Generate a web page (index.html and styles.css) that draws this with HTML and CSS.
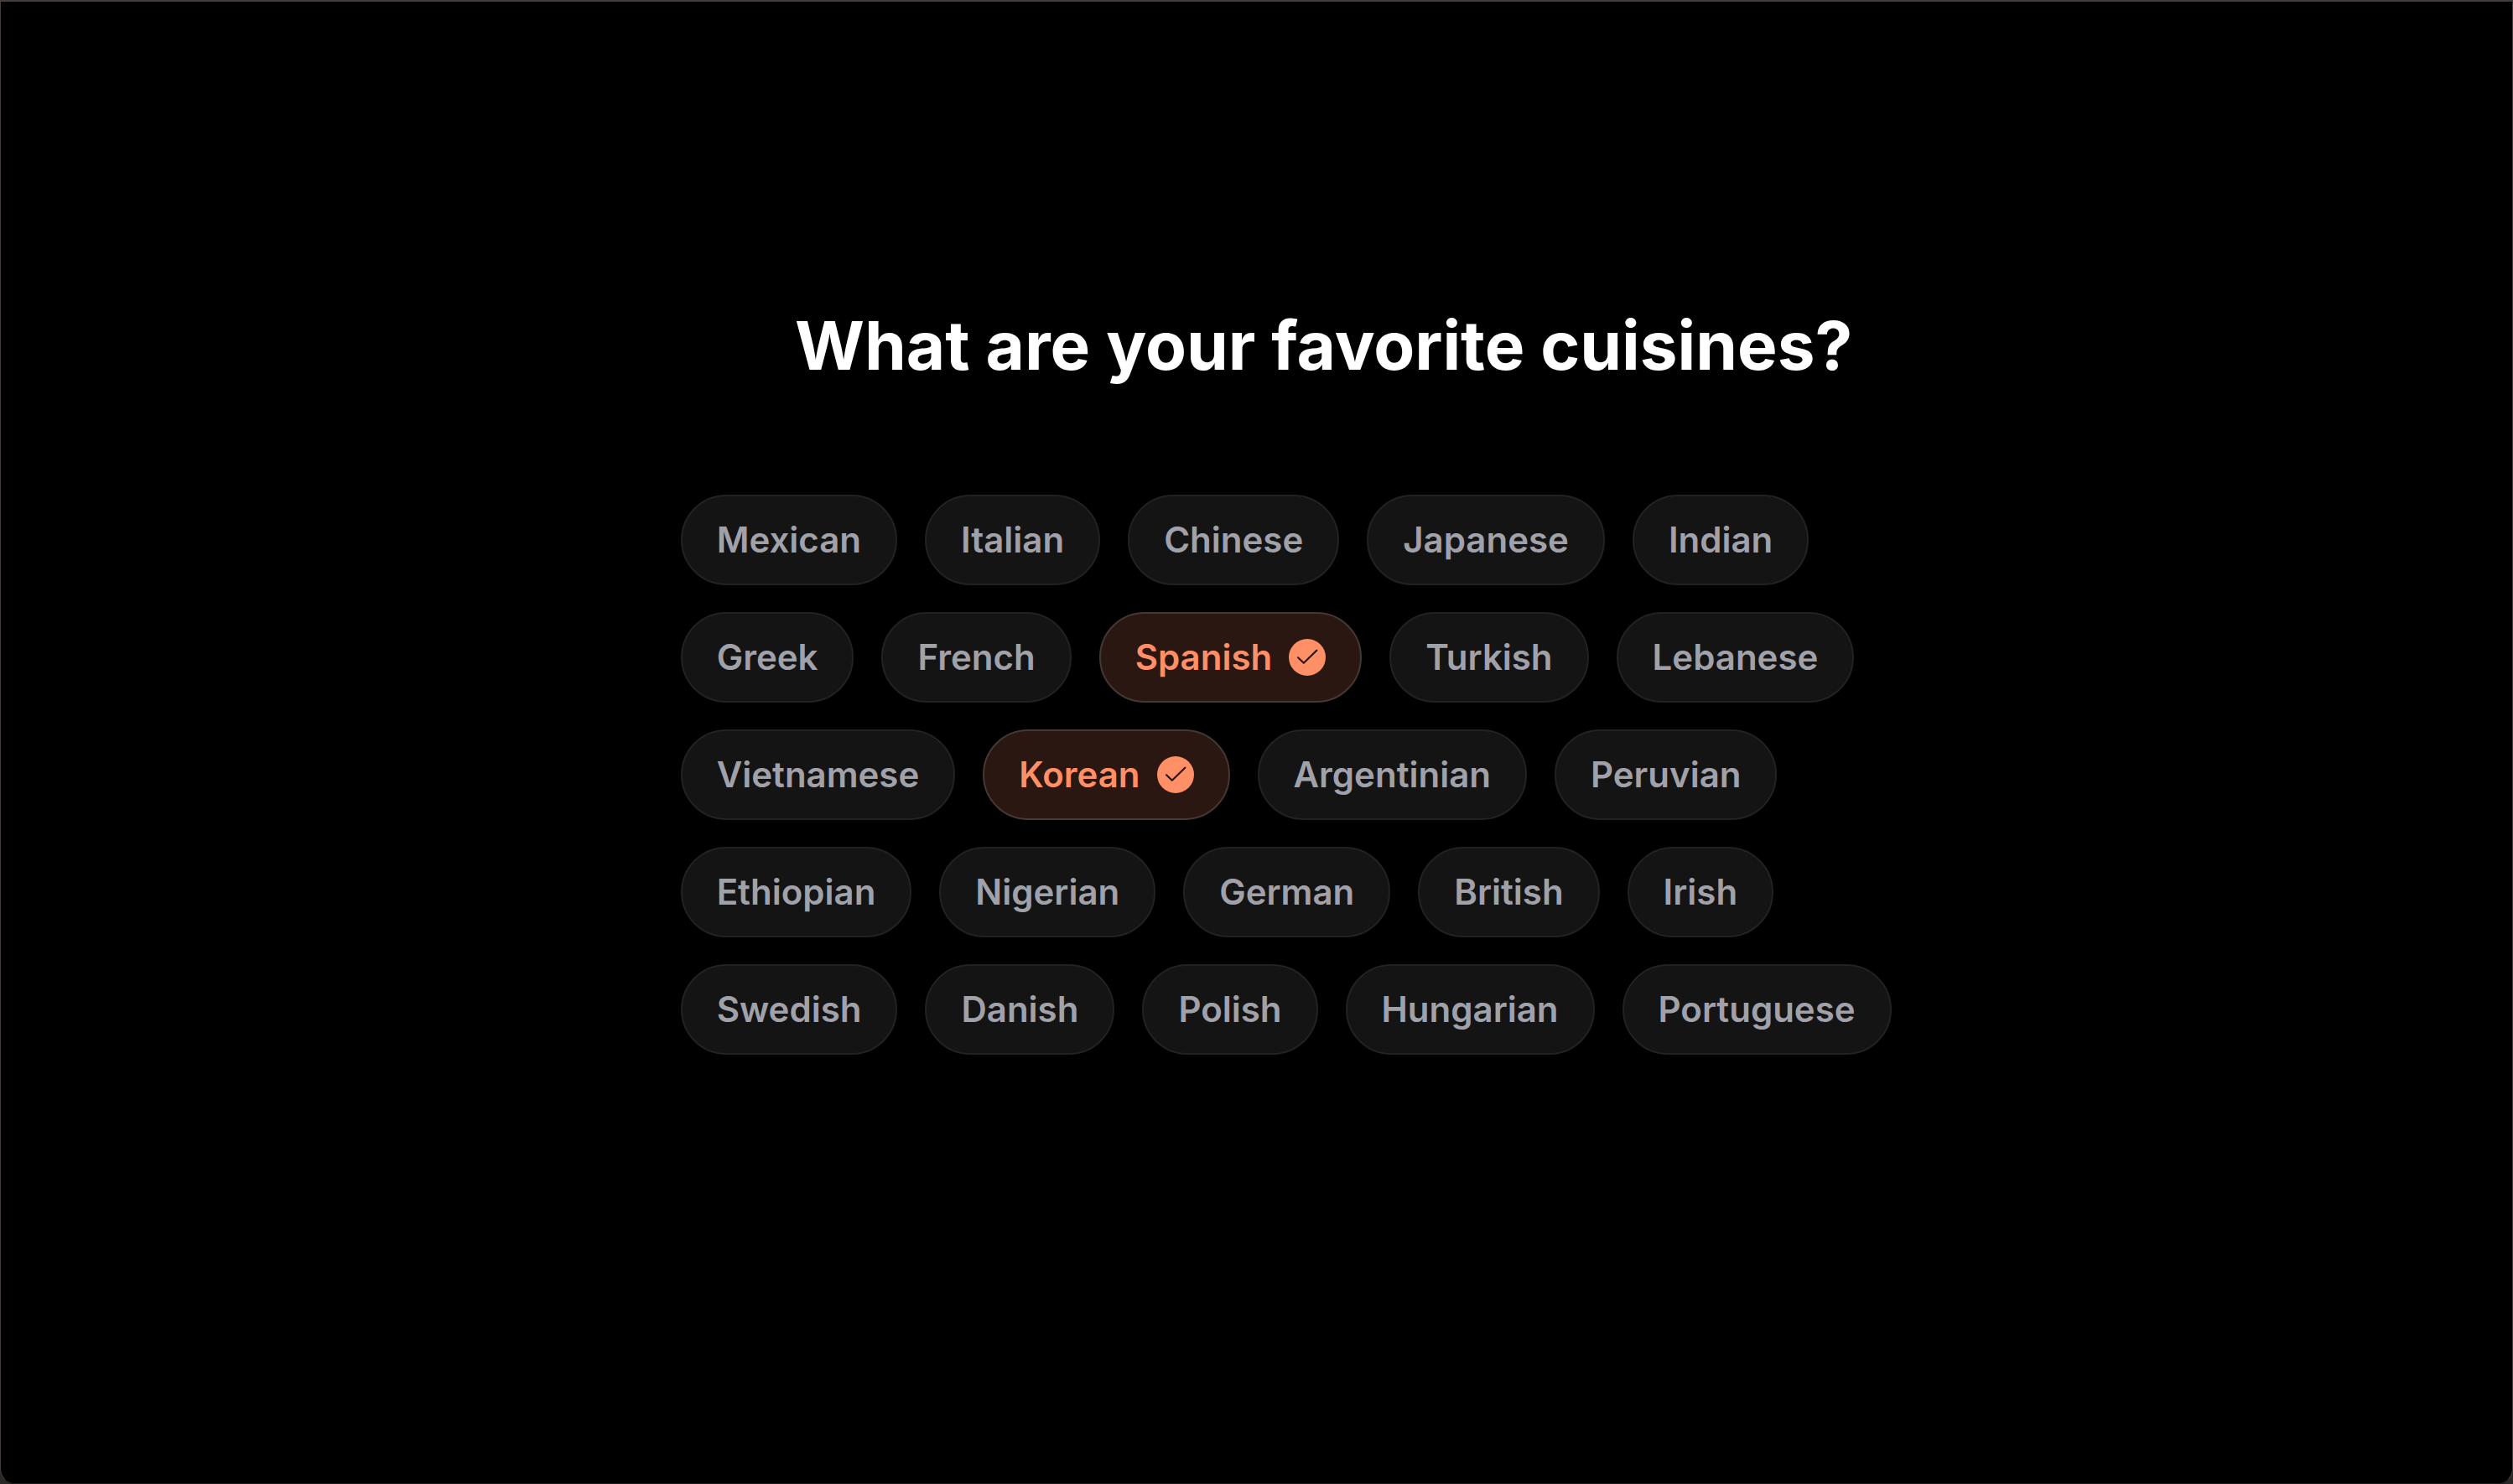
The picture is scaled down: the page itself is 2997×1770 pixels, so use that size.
FILE: index.html
```html
<!DOCTYPE html>
<html lang="en">
<head>
<meta charset="utf-8">
<meta name="viewport" content="width=device-width, initial-scale=1">
<title>What are your favorite cuisines?</title>
<link rel="stylesheet" href="styles.css">
</head>
<body>
<main class="window">
  <h1 class="title">What are your favorite cuisines?</h1>
  <div class="chips">
    <button type="button" class="chip" aria-pressed="false">Mexican</button>
    <button type="button" class="chip" aria-pressed="false">Italian</button>
    <button type="button" class="chip" aria-pressed="false">Chinese</button>
    <button type="button" class="chip" aria-pressed="false">Japanese</button>
    <button type="button" class="chip" aria-pressed="false">Indian</button>
    <button type="button" class="chip" aria-pressed="false">Greek</button>
    <button type="button" class="chip" aria-pressed="false">French</button>
    <button type="button" class="chip chip-selected" aria-pressed="true">Spanish
      <svg class="check" viewBox="0 0 44 44" aria-hidden="true"><circle cx="22" cy="22" r="22" fill="#ff8f66"/><path d="M11 22.3 17.8 28.8 33.3 13.7" fill="none" stroke="#2a1711" stroke-width="2.2" stroke-linecap="round" stroke-linejoin="round"/></svg>
    </button>
    <button type="button" class="chip" aria-pressed="false">Turkish</button>
    <button type="button" class="chip" aria-pressed="false">Lebanese</button>
    <button type="button" class="chip" aria-pressed="false">Vietnamese</button>
    <button type="button" class="chip chip-selected" aria-pressed="true">Korean
      <svg class="check" viewBox="0 0 44 44" aria-hidden="true"><circle cx="22" cy="22" r="22" fill="#ff8f66"/><path d="M11 22.3 17.8 28.8 33.3 13.7" fill="none" stroke="#2a1711" stroke-width="2.2" stroke-linecap="round" stroke-linejoin="round"/></svg>
    </button>
    <button type="button" class="chip" aria-pressed="false">Argentinian</button>
    <button type="button" class="chip" aria-pressed="false">Peruvian</button>
    <button type="button" class="chip" aria-pressed="false">Ethiopian</button>
    <button type="button" class="chip" aria-pressed="false">Nigerian</button>
    <button type="button" class="chip" aria-pressed="false">German</button>
    <button type="button" class="chip" aria-pressed="false">British</button>
    <button type="button" class="chip" aria-pressed="false">Irish</button>
    <button type="button" class="chip" aria-pressed="false">Swedish</button>
    <button type="button" class="chip" aria-pressed="false">Danish</button>
    <button type="button" class="chip" aria-pressed="false">Polish</button>
    <button type="button" class="chip" aria-pressed="false">Hungarian</button>
    <button type="button" class="chip" aria-pressed="false">Portuguese</button>
  </div>
</main>
</body>
</html>
```
FILE: styles.css
```css
* {
  box-sizing: border-box;
}

body {
  margin: 0;
  background: #2a2726;
  font-family: "Inter", "Liberation Sans", sans-serif;
}

.window {
  min-height: 100vh;
  padding: 362px 21.7% 120px 27.05%;
  border: 1px solid #453d3b;
  border-top-width: 2px;
  border-bottom-color: #1c1918;
  border-radius: 0 0 18px 18px;
  background: #000;
}

.title {
  margin: 0 0 130px;
  color: #fff;
  font-size: 80px;
  font-weight: 700;
  line-height: 96px;
  text-align: center;
}

.chips {
  display: flex;
  flex-wrap: wrap;
  gap: 32px 33px;
}

.chip {
  display: flex;
  align-items: center;
  gap: 20px;
  height: 108px;
  padding: 0 41px;
  border: 2px solid #222;
  border-radius: 54px;
  background: #141414;
  color: #a1a1aa;
  font-family: inherit;
  font-size: 42px;
  font-weight: 600;
  line-height: 52px;
  cursor: pointer;
}

.chip-selected {
  border-color: #453834;
  background: #2a1711;
  color: #ff8f66;
}

.check {
  flex: none;
  width: 44px;
  height: 44px;
}
```
